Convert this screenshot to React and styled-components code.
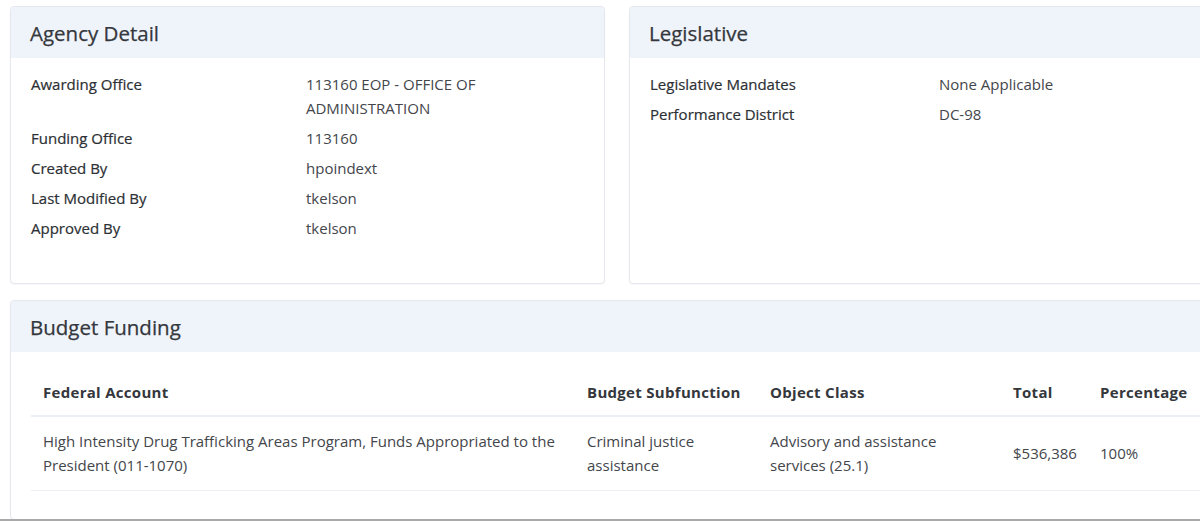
import React from "react";
import styled, { createGlobalStyle } from "styled-components";

const GlobalStyle = createGlobalStyle`
  html, body {
    margin: 0;
    padding: 0;
    background: #ffffff;
    font-family: "Open Sans", "Noto Sans", sans-serif;
    color: #3a3d42;
  }
`;

const Page = styled.div`
  width: 1200px;
  height: 521px;
  overflow: hidden;
  box-sizing: border-box;
  border-bottom: 2px solid #a9a9a9;
  padding: 6px 0 0 10px;
`;

const Grid = styled.div`
  width: 1214px;
  display: grid;
  grid-template-columns: 595px 595px;
  column-gap: 24px;
  row-gap: 16px;
`;

const Card = styled.section`
  background: #ffffff;
  border: 1px solid #e4e7ec;
  border-radius: 4px;
  box-shadow: 0 1px 2px rgba(20, 30, 50, 0.04);
  overflow: hidden;
  grid-column: ${(p) => (p.$wide ? "1 / -1" : "auto")};
  min-height: ${(p) => p.$minHeight || "auto"};
  box-sizing: border-box;
`;

const CardHeader = styled.header`
  background: #eff3fa;
  height: 51px;
  display: flex;
  align-items: center;
  padding: 0 19px;
`;

const Title = styled.h2`
  margin: 0;
  font-size: 20.5px;
  font-weight: 500;
  color: #34373c;
  -webkit-text-stroke: 0.25px #34373c;
`;

const DetailList = styled.dl`
  margin: 0;
  padding: 14px 20px 20px;
  display: grid;
  grid-template-columns: ${(p) => p.$labelWidth} 1fr;
  row-gap: 6px;
`;

const Label = styled.dt`
  font-size: 15px;
  line-height: 24px;
  font-weight: 500;
  color: #2c2f33;
  -webkit-text-stroke: 0.2px #2c2f33;
`;

const Value = styled.dd`
  margin: 0;
  font-size: 15px;
  line-height: 24px;
  color: #43464b;
  max-width: 200px;
`;

const TableWrap = styled.div`
  padding: 16px 20px 28px;
`;

const Table = styled.table`
  width: 1170px;
  border-collapse: collapse;
  table-layout: fixed;
`;

const Th = styled.th`
  text-align: left;
  font-size: 15px;
  font-weight: 700;
  letter-spacing: 0.3px;
  color: #34373c;
  padding: 14px 12px 13px;
  border-bottom: 2px solid #eceff4;
  white-space: nowrap;
  width: ${(p) => p.$w};
`;

const Td = styled.td`
  font-size: 15px;
  line-height: 24px;
  color: #43464b;
  padding: 12px 12px 13px;
  border-bottom: 1px solid #eceff4;
  vertical-align: middle;
`;

const agency = [
  ["Awarding Office", "113160 EOP - OFFICE OF ADMINISTRATION"],
  ["Funding Office", "113160"],
  ["Created By", "hpoindext"],
  ["Last Modified By", "tkelson"],
  ["Approved By", "tkelson"],
];

const legislative = [
  ["Legislative Mandates", "None Applicable"],
  ["Performance District", "DC-98"],
];

// widths exclude the 12px cell padding on each side
const columns = [
  ["Federal Account", "520px"],
  ["Budget Subfunction", "159px"],
  ["Object Class", "219px"],
  ["Total", "63px"],
  ["Percentage", "89px"],
];

const rows = [
  [
    "High Intensity Drug Trafficking Areas Program, Funds Appropriated to the President (011-1070)",
    "Criminal justice assistance",
    "Advisory and assistance services (25.1)",
    "$536,386",
    "100%",
  ],
];

export default function App() {
  return (
    <>
      <GlobalStyle />
      <Page>
        <Grid>
          <Card $minHeight="278px">
            <CardHeader>
              <Title>Agency Detail</Title>
            </CardHeader>
            <DetailList $labelWidth="275px">
              {agency.map(([k, v]) => (
                <React.Fragment key={k}>
                  <Label>{k}</Label>
                  <Value>{v}</Value>
                </React.Fragment>
              ))}
            </DetailList>
          </Card>
          <Card $minHeight="278px">
            <CardHeader>
              <Title>Legislative</Title>
            </CardHeader>
            <DetailList $labelWidth="289px">
              {legislative.map(([k, v]) => (
                <React.Fragment key={k}>
                  <Label>{k}</Label>
                  <Value>{v}</Value>
                </React.Fragment>
              ))}
            </DetailList>
          </Card>
          <Card $wide>
            <CardHeader>
              <Title>Budget Funding</Title>
            </CardHeader>
            <TableWrap>
              <Table>
                <thead>
                  <tr>
                    {columns.map(([c, w]) => (
                      <Th key={c} $w={w}>
                        {c}
                      </Th>
                    ))}
                  </tr>
                </thead>
                <tbody>
                  {rows.map((r) => (
                    <tr key={r[0]}>
                      {r.map((cell, i) => (
                        <Td key={i}>{cell}</Td>
                      ))}
                    </tr>
                  ))}
                </tbody>
              </Table>
            </TableWrap>
          </Card>
        </Grid>
      </Page>
    </>
  );
}
